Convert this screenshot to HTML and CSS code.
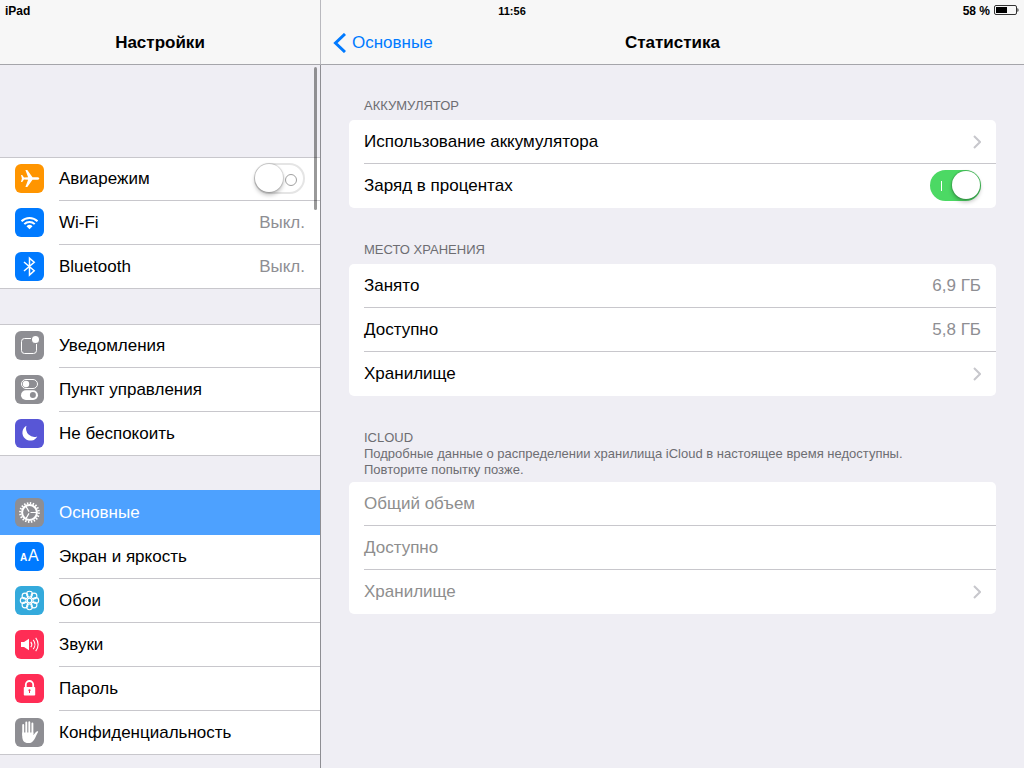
FILE: index.html
```html
<!DOCTYPE html>
<html lang="ru">
<head>
  <meta charset="UTF-8" />
  <meta name="viewport" content="width=device-width, initial-scale=1.0" />
  <title>Настройки</title>
  <link rel="stylesheet" href="styles.css">
</head>
<body>
<div class="status-bar">
  <span>iPad</span>
  <time>11:56</time>
  <span class="battery">58 %
    <svg width="25" height="10" viewBox="0 0 25 10">
      <rect x="0.5" y="0.5" width="22" height="9" rx="1.5" fill="none" stroke="#333" />
      <rect x="2" y="2" width="11" height="6" />
      <path d="M23.5 3c1.300 .5 1.300 3.500 0 4z" />
    </svg>
  </span>
</div>

<div class="container">
  <nav class="sidebar">
    <header class="title-bar"><h1>Настройки</h1></header>
    <div class="sidebar-list">
      <ul class="menu">
        <li>
          <svg class="icon orange" viewBox="0 0 29 29"><path fill="#fff" d="M24.300 14.500c0-.8-1.100-1.300-2.500-1.300h-4.300L12.300 6h-1.900l2.700 7.200-4.100.2L7.200 11H6l.9 3.500L6 18h1.200L9 15.600l4.100.2-2.700 7.300h1.900l5.200-7.300h4.300c1.400 0 2.500-.5 2.500-1.300z" /></svg>
          <div class="cell"><label for="airplane">Авиарежим</label><input type="checkbox" id="airplane" class="switch" /></div>
        </li>
        <li>
          <svg class="icon blue" viewBox="0 0 29 29"><g fill="none" stroke="#fff" stroke-width="2"><path d="M6.500 13.200a11.300 11.300 0 0 1 16 0" /><path d="M9.300 16.100a7.300 7.300 0 0 1 10.400 0" /></g><path fill="#fff" d="M11.500 18.300a4.300 4.300 0 0 1 6 0l-3 3z" /></svg>
          <a class="cell" href="#wifi">Wi-Fi <span class="value">Выкл.</span></a>
        </li>
        <li>
          <svg class="icon blue" viewBox="0 0 29 29"><path fill="none" stroke="#fff" stroke-width="1.500" d="M9 10l10.200 8.800-4.700 4.200V6.200l4.700 4L9 19" /></svg>
          <a class="cell" href="#bluetooth">Bluetooth <span class="value">Выкл.</span></a>
        </li>
      </ul>

      <ul class="menu">
        <li>
          <svg class="icon gray" viewBox="0 0 29 29"><rect x="6.500" y="7.500" width="15" height="15" rx="3" fill="none" stroke="#fff" /><circle cx="20.500" cy="8.500" r="4.100" fill="#fff" stroke="#8e8e93" stroke-width="1.200" /></svg>
          <a class="cell" href="#notifications">Уведомления</a>
        </li>
        <li>
          <svg class="icon gray" viewBox="0 0 29 29"><rect x="6.500" y="4.500" width="16" height="9" rx="4.500" fill="none" stroke="#fff" /><circle cx="11" cy="9" r="3.200" fill="#fff" /><rect x="6" y="15.300" width="17" height="9.700" rx="4.850" fill="#fff" /><circle cx="17.900" cy="20.100" r="3" fill="#8e8e93" /></svg>
          <a class="cell" href="#control">Пункт управления</a>
        </li>
        <li>
          <svg class="icon purple" viewBox="0 0 29 29"><path fill="#fff" d="M11.500 6.800A7.900 7.900 0 1 0 22.300 17.400 8.400 8.400 0 0 1 11.500 6.800z" /></svg>
          <a class="cell" href="#dnd">Не беспокоить</a>
        </li>
      </ul>

      <ul class="menu">
        <li class="active">
          <svg class="icon gray" viewBox="0 0 29 29"><g fill="none" stroke="#fff"><circle cx="14.500" cy="14.500" r="7.400" stroke-width="2" /><circle cx="14.500" cy="14.500" r="9.300" stroke-width="2.200" stroke-dasharray="1.450 1.472" /><path stroke-width="1.200" d="M15.500 14.500h6M14 13.600L11 8.500M14 15.400L11 20.500" /></g></svg>
          <a class="cell" href="#general">Основные</a>
        </li>
        <li>
          <svg class="icon blue" viewBox="0 0 29 29"><text x="5" y="19" class="small-a">A</text><text x="13" y="19" class="big-a">A</text></svg>
          <a class="cell" href="#display">Экран и яркость</a>
        </li>
        <li>
          <svg class="icon cyan" viewBox="0 0 29 29"><g fill="none" stroke="#fff" stroke-width="1.100"><circle cx="14.500" cy="14.500" r="2.200" /><circle cx="14.500" cy="8.200" r="2.900" /><circle cx="19" cy="10" r="2.900" /><circle cx="20.800" cy="14.500" r="2.900" /><circle cx="19" cy="19" r="2.900" /><circle cx="14.500" cy="20.800" r="2.900" /><circle cx="10" cy="19" r="2.900" /><circle cx="8.200" cy="14.500" r="2.900" /><circle cx="10" cy="10" r="2.900" /></g></svg>
          <a class="cell" href="#wallpaper">Обои</a>
        </li>
        <li>
          <svg class="icon red" viewBox="0 0 29 29"><path fill="#fff" d="M6 12h3l5-3.200v11.400L9 17H6z" /><g fill="none" stroke="#fff" stroke-width="1.100"><path d="M15.800 11.800a4.500 4.500 0 0 1 0 5.400M18.200 9.800a7.500 7.500 0 0 1 0 9.400M20.700 7.800a10.500 10.500 0 0 1 0 13.400" /></g></svg>
          <a class="cell" href="#sounds">Звуки</a>
        </li>
        <li>
          <svg class="icon red" viewBox="0 0 29 29"><path fill="none" stroke="#fff" stroke-width="1.800" d="M10.800 14v-3.300a3.700 3.700 0 0 1 7.400 0V14" /><rect x="8.800" y="13" width="11.400" height="8.500" rx="0.800" fill="#fff" /><circle cx="14.500" cy="16.300" r="1.100" fill="#ff2d55" /><path stroke="#ff2d55" d="M14.500 16.500v2.500" /></svg>
          <a class="cell" href="#passcode">Пароль</a>
        </li>
        <li>
          <svg class="icon gray" viewBox="0 0 29 29"><g fill="none" stroke="#fff" stroke-width="1.900" stroke-linecap="round"><path d="M8.200 7v10M11.300 4.500V16M14.300 4.200V16M17.400 5.500V16" /></g><path fill="#fff" d="M7.250 14.500h11.100v2.700c1.400-1.600 2.400-3.700 4-4 .8-.1 1 .4.600 1-1.400 2.100-2.200 5-3.700 7.200-1.500 2.300-3 3.700-6 3.700-4.300 0-6-3-6-6.600z" /></svg>
          <a class="cell" href="#privacy">Конфиденциальность</a>
        </li>
      </ul>
      <div class="scrollbar"></div>
    </div>
  </nav>

  <main class="content">
    <header class="title-bar">
      <a class="back" href="#general">
        <svg width="13" height="20" viewBox="0 0 13 20"><path fill="none" stroke="#007aff" stroke-width="3" d="M12 1L2.500 10l9.500 9" /></svg>
        Основные
      </a>
      <h2>Статистика</h2>
    </header>

    <div class="groups">
      <section>
        <h3>АККУМУЛЯТОР</h3>
        <ul class="card">
          <li><a class="cell" href="#usage">Использование аккумулятора <svg class="arrow" viewBox="0 0 8 14"><path d="M1 1l6 6-6 6" /></svg></a></li>
          <li><div class="cell"><label for="percent">Заряд в процентах</label><input type="checkbox" id="percent" class="switch" checked /></div></li>
        </ul>
      </section>

      <section>
        <h3>МЕСТО ХРАНЕНИЯ</h3>
        <ul class="card">
          <li><div class="cell">Занято <span class="value">6,9 ГБ</span></div></li>
          <li><div class="cell">Доступно <span class="value">5,8 ГБ</span></div></li>
          <li><a class="cell" href="#storage">Хранилище <svg class="arrow" viewBox="0 0 8 14"><path d="M1 1l6 6-6 6" /></svg></a></li>
        </ul>
      </section>

      <section>
        <h3>ICLOUD</h3>
        <p>Подробные данные о распределении хранилища iCloud в настоящее время недоступны. Повторите попытку позже.</p>
        <ul class="card disabled">
          <li><div class="cell">Общий объем</div></li>
          <li><div class="cell">Доступно</div></li>
          <li><a class="cell" href="#icloud">Хранилище <svg class="arrow" viewBox="0 0 8 14"><path d="M1 1l6 6-6 6" /></svg></a></li>
        </ul>
      </section>
    </div>
  </main>
</div>
</body>
</html>
```

FILE: styles.css
```css
* {
  box-sizing: border-box;
}
body {
  margin: 0;
  font-family: "Liberation Sans", Arial, sans-serif;
  font-size: 17px;
  line-height: 20px;
  color: #000;
  background: #efeef4;
}
h1, h2, h3, p, ul {
  margin: 0;
  padding: 0;
}
ul {
  list-style: none;
}
a {
  color: inherit;
  text-decoration: none;
}
.status-bar {
  position: absolute;
  top: 0;
  left: 0;
  right: 0;
  z-index: 2;
  display: grid;
  grid-template-columns: 1fr auto 1fr;
  align-items: center;
  height: 20px;
  padding: 2px 5px 0;
  font-size: 12px;
  line-height: 18px;
  font-weight: bold;
}
.status-bar time {
  font-size: 11px;
}
.battery {
  display: flex;
  justify-content: flex-end;
  align-items: center;
  gap: 4px;
}
.battery svg {
  margin-bottom: 2px;
}
.container {
  display: flex;
  min-height: 100vh;
}
.sidebar {
  display: flex;
  flex-direction: column;
  flex: 0 0 321px;
}
.content {
  flex: 1;
  min-width: 0;
}
.title-bar {
  position: relative;
  display: flex;
  justify-content: center;
  height: 65px;
  padding-top: 33px;
  background: #f7f7f7;
  border-bottom: 1px solid #a5a5aa;
}
.sidebar .title-bar {
  border-right: 1px solid #b9b9be;
}
h1, h2 {
  font-size: 17px;
  line-height: 20px;
  font-weight: bold;
}
.back {
  position: absolute;
  left: 12px;
  display: flex;
  align-items: center;
  gap: 6px;
  color: #007aff;
}

/* left menu */
.sidebar-list {
  position: relative;
  flex: 1;
  padding: 92px 0 13px;
  border-right: 1px solid #8e8e93;
}
.menu {
  background: #fff;
  box-shadow: inset 0 1px #c8c7cc, inset 0 -1px #c8c7cc;
}
.menu + .menu {
  margin-top: 35px;
}
.menu li {
  display: flex;
  padding-left: 15px;
}
.menu .active {
  background: #4da1ff;
  box-shadow: 0 -1px #4da1ff;
  color: #fff;
}
.icon {
  flex: none;
  width: 29px;
  height: 29px;
  margin: 7px 15px 0 0;
  border-radius: 6px;
}
.orange { background: #ff9500; }
.blue { background: #007aff; }
.gray { background: #8e8e93; }
.purple { background: #5856d6; }
.cyan { background: #34aadc; }
.red { background: #ff2d55; }
.small-a {
  font-size: 10px;
  font-weight: bold;
  fill: #fff;
}
.big-a {
  font-size: 16px;
  fill: #fff;
}
.cell {
  flex: 1;
  display: flex;
  align-items: center;
  justify-content: space-between;
  height: 44px;
  padding-right: 15px;
  border-bottom: 1px solid #c8c7cc;
}
li:last-child .cell,
.active .cell {
  border-color: transparent;
}
.value {
  color: #8e8e93;
}
.scrollbar {
  position: absolute;
  top: 2px;
  right: 3px;
  width: 3px;
  height: 143px;
  border-radius: 2px;
  background: rgba(0, 0, 0, 0.4);
}

/* on / off switch */
.switch {
  appearance: none;
  position: relative;
  width: 51px;
  height: 31px;
  margin: 0;
  border: 2px solid #e5e5e5;
  border-radius: 16px;
  background: #fff;
}
.switch::before {
  content: "";
  position: absolute;
  top: -1px;
  left: -1px;
  width: 28px;
  height: 28px;
  border-radius: 50%;
  background: #fff;
  box-shadow: 0 0 1px 1px rgba(0, 0, 0, 0.15), 0 3px 4px rgba(0, 0, 0, 0.25);
}
.switch::after {
  content: "";
  position: absolute;
  top: 9px;
  right: 6px;
  width: 10px;
  height: 10px;
  border: 1px solid #a0a0a0;
  border-radius: 50%;
}
.switch:checked {
  background: #4cd964;
  border-color: #4cd964;
}
.switch:checked::before {
  left: 20px;
}
.switch:checked::after {
  left: 9px;
  width: 1px;
  border: 0;
  border-radius: 0;
  background: #fff;
}

/* right side */
.groups {
  padding: 33px 28px;
}
section + section {
  margin-top: 34px;
}
h3, p {
  padding: 0 15px;
  font-size: 13px;
  line-height: 16px;
  font-weight: normal;
  color: #6d6d72;
}
p {
  max-width: 600px;
}
.card {
  margin-top: 6px;
  padding-left: 15px;
  border-radius: 5px;
  background: #fff;
}
p + .card {
  margin-top: 4px;
}
.disabled {
  color: #8e8e8e;
}
.arrow {
  width: 8px;
  height: 14px;
  fill: none;
  stroke: #c7c7cc;
  stroke-width: 2;
}
```
